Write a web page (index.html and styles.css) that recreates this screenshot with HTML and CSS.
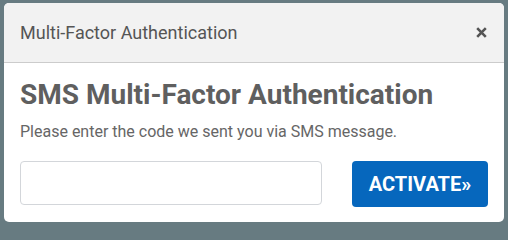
FILE: index.html
```html
<!DOCTYPE html>
<html lang="en">
<head>
<meta charset="utf-8">
<title>Multi-Factor Authentication</title>
<link rel="stylesheet" href="styles.css">
</head>
<body>
<div class="modal">
  <div class="modal-header">
    <span class="modal-title">Multi-Factor Authentication</span>
    <button class="close" aria-label="Close">
      <svg width="11" height="11" viewBox="0 0 11 11"><path d="M1.2 1.2L9.8 9.8M9.8 1.2L1.2 9.8" stroke="#555" stroke-width="2.6" stroke-linecap="butt"/></svg>
    </button>
  </div>
  <div class="modal-body">
    <h1 class="heading">SMS Multi-Factor Authentication</h1>
    <p class="hint">Please enter the code we sent you via SMS message.</p>
    <div class="form-row">
      <input class="code-input" type="text">
      <button class="activate">ACTIVATE»</button>
    </div>
  </div>
</div>
</body>
</html>
```

FILE: styles.css
```css
html, body {
  margin: 0;
  padding: 0;
}
body {
  width: 508px;
  height: 226px;
  background: #677b81;
  font-family: Roboto, "Liberation Sans", sans-serif;
  padding: 3px 4px 0 4px;
  box-sizing: border-box;
  overflow: hidden;
}
.modal {
  width: 500px;
  height: 219px;
  background: #fff;
  border-radius: 5px;
  overflow: hidden;
  display: flex;
  flex-direction: column;
}
.modal-header {
  height: 59px;
  background: #f2f2f2;
  border-bottom: 1px solid #cccccc;
  display: flex;
  align-items: center;
  justify-content: space-between;
  padding: 0 17px 0 16px;
  flex-shrink: 0;
}
.modal-title {
  font-size: 18px;
  color: #555;
}
.close {
  border: 0;
  background: none;
  padding: 0;
  width: 11px;
  height: 11px;
  display: flex;
}
.modal-body {
  padding: 15px 16px 0 16px;
}
.heading {
  margin: 0;
  font-size: 28px;
  font-weight: 700;
  color: #5f5f5f;
  line-height: 34px;
}
.hint {
  margin: 10px 0 0 0;
  font-size: 16px;
  color: #666;
  line-height: 20px;
}
.form-row {
  display: flex;
  align-items: flex-start;
  justify-content: space-between;
  margin-top: 19px;
}
.code-input {
  width: 302px;
  height: 44px;
  box-sizing: border-box;
  border: 1px solid #d3d6da;
  border-radius: 4px;
  margin: 0;
}
.activate {
  width: 136px;
  height: 46px;
  background: #0667bd;
  color: #fff;
  border: 0;
  border-radius: 4px;
  font-family: Roboto, "Liberation Sans", sans-serif;
  font-size: 20px;
  font-weight: 700;
  padding: 0;
}
```
